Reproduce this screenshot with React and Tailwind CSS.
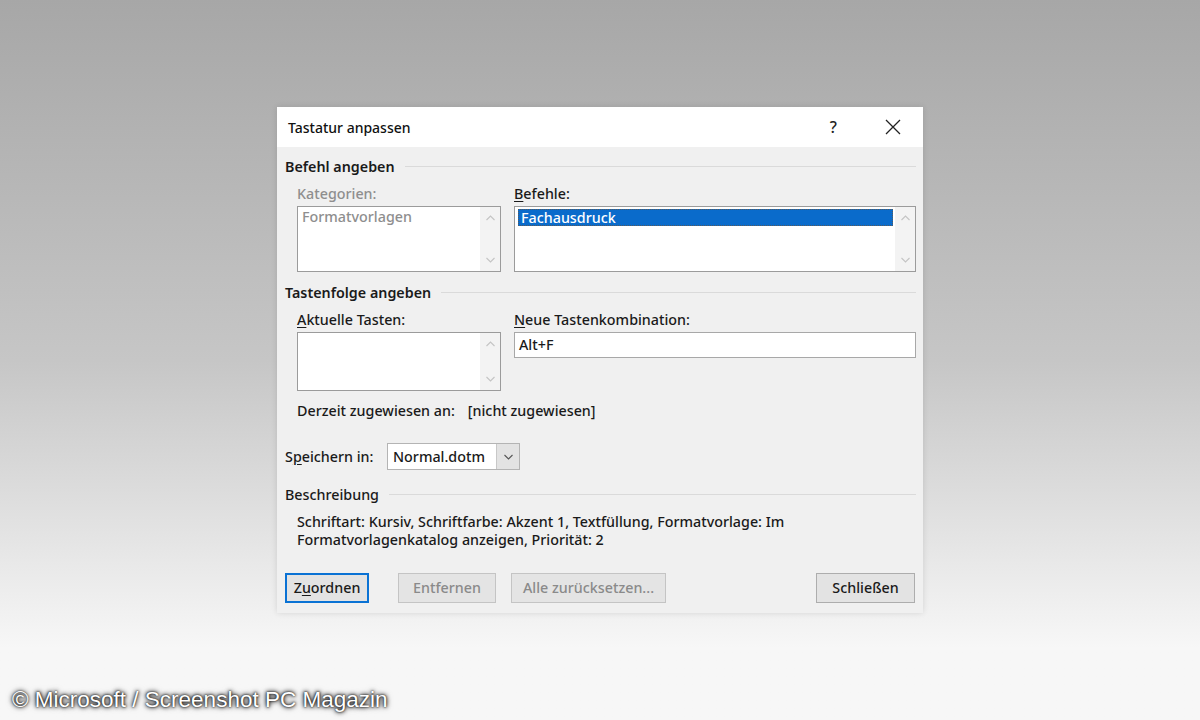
import React from "react";

const font = { fontFamily: '"Noto Sans", "Liberation Sans", sans-serif' };

function Chevron({ dir = "up", className = "" }) {
  return (
    <svg width="9" height="6" viewBox="0 0 9 6" className={className}>
      {dir === "up" ? (
        <path d="M0.5 5 L4.5 1 L8.5 5" fill="none" stroke="currentColor" strokeWidth="1.1" />
      ) : (
        <path d="M0.5 1 L4.5 5 L8.5 1" fill="none" stroke="currentColor" strokeWidth="1.1" />
      )}
    </svg>
  );
}

function ScrollBar() {
  return (
    <div className="w-[20px] bg-[#f3f3f3] flex flex-col items-center justify-between py-[8px] text-[#c4c4c4]">
      <Chevron dir="up" />
      <Chevron dir="down" />
    </div>
  );
}

function SectionHeader({ children }) {
  return (
    <div className="flex items-center h-[18px]">
      <span className="font-semibold text-[14.3px] text-[#1a1a1a] leading-[18px]">{children}</span>
      <div className="flex-1 h-px bg-[#dadada] ml-[10px] mr-[7px] -mt-[2px]" />
    </div>
  );
}

function Btn({ children, disabled, primary, w }) {
  return (
    <div
      className={
        "h-[30px] flex items-center justify-center text-[14.3px] font-medium " +
        w +
        " " +
        (primary
          ? "border-2 border-[#0a72d4] bg-[#e3e3e3] text-[#1a1a1a]"
          : disabled
          ? "border border-[#c4c4c4] bg-[#e4e4e4] text-[#8a8a8a]"
          : "border border-[#adadad] bg-[#e3e3e3] text-[#1a1a1a]")
      }
    >
      {children}
    </div>
  );
}

export default function App() {
  return (
    <div
      className="relative w-[1200px] h-[720px] overflow-hidden bg-linear-to-b from-[#a7a7a7] via-[#c6c6c6] via-50% to-[#f7f7f7] to-90% pt-[107px] pl-[277px]"
      style={font}
    >
      <div className="w-[646px] shadow-[0_0_6px_rgba(0,0,0,0.12)]">
        {/* Title bar */}
        <div className="h-[40px] bg-white flex items-center pl-[11px] pr-[22px]">
          <span className="text-[14px] font-medium text-[#111] flex-1 pt-[1px]">Tastatur anpassen</span>
          <span className="text-[16px] font-medium text-[#222] mr-[48px]">?</span>
          <svg width="16" height="16" viewBox="0 0 16 16">
            <path d="M1 1 L15 15 M15 1 L1 15" stroke="#222" strokeWidth="1.3" />
          </svg>
        </div>

        {/* Body */}
        <div className="bg-[#f0f0f0] pl-[8px] pt-[11px] pb-[10px] text-[#1a1a1a] text-[14.3px]">
          <SectionHeader>Befehl angeben</SectionHeader>

          <div className="flex gap-[13px] pl-[12px] mt-[9px] pr-[7px]">
            <div className="w-[204px] flex flex-col">
              <div className="h-[18px] font-medium text-[#8e8e8e] leading-[18px]">Kategorien:</div>
              <div className="mt-[3px] h-[66px] border border-[#9b9b9b] bg-white flex">
                <div className="flex-1 pl-[4px] pt-[1px] font-medium text-[#8e8e8e] leading-[18px]">
                  Formatvorlagen
                </div>
                <ScrollBar />
              </div>
            </div>
            <div className="flex-1 flex flex-col">
              <div className="h-[18px] font-medium leading-[18px]">
                <span className="underline underline-offset-2">B</span>efehle:
              </div>
              <div className="mt-[3px] h-[66px] border border-[#9b9b9b] bg-white flex">
                <div className="flex-1 pl-[3px] pt-[2px] pr-[2px]">
                  <div className="h-[17px] bg-[#0a6bcb] border border-dotted border-[#5a5a5a] text-white font-medium leading-[15px] pl-[2px]">
                    Fachausdruck
                  </div>
                </div>
                <ScrollBar />
              </div>
            </div>
          </div>

          <div className="mt-[12px]">
            <SectionHeader>Tastenfolge angeben</SectionHeader>
          </div>

          <div className="flex gap-[13px] pl-[12px] mt-[9px] pr-[7px]">
            <div className="w-[204px] flex flex-col">
              <div className="h-[18px] font-medium leading-[18px]">
                <span className="underline underline-offset-2">A</span>ktuelle Tasten:
              </div>
              <div className="mt-[3px] h-[59px] border border-[#9b9b9b] bg-white flex">
                <div className="flex-1" />
                <ScrollBar />
              </div>
            </div>
            <div className="flex-1 flex flex-col">
              <div className="h-[18px] font-medium leading-[18px]">
                <span className="underline underline-offset-2">N</span>eue Tastenkombination:
              </div>
              <div className="mt-[3px] h-[26px] border border-[#a8a8a8] bg-white flex items-center pl-[4px] font-medium">
                Alt+F
              </div>
            </div>
          </div>

          <div className="pl-[12px] mt-[11px] h-[18px] flex items-center font-medium leading-[18px]">
            <span>Derzeit zugewiesen an:</span>
            <span className="ml-[13px]">[nicht zugewiesen]</span>
          </div>

          <div className="mt-[23px] flex items-center h-[27px]">
            <span className="font-medium w-[102px]">
              S<span className="underline underline-offset-2">p</span>eichern in:
            </span>
            <div className="w-[133px] h-[27px] border border-[#b4b4b4] bg-white flex">
              <div className="flex-1 flex items-center pl-[5px] font-medium">Normal.dotm</div>
              <div className="w-[23px] bg-[#e3e3e3] border-l border-[#c8c8c8] flex items-center justify-center text-[#555]">
                <Chevron dir="down" />
              </div>
            </div>
          </div>

          <div className="mt-[16px]">
            <SectionHeader>
              <span className="font-medium">Beschreibung</span>
            </SectionHeader>
          </div>

          <div className="pl-[12px] mt-[9px] font-medium leading-[18px] w-[540px]">
            Schriftart: Kursiv, Schriftfarbe: Akzent 1, Textfüllung, Formatvorlage: Im Formatvorlagenkatalog anzeigen,
            Priorität: 2
          </div>

          <div className="mt-[24px] flex items-center pr-[8px]">
            <Btn primary w="w-[84px]">
              Z<span className="underline underline-offset-2">u</span>ordnen
            </Btn>
            <div className="ml-[29px]">
              <Btn disabled w="w-[98px]">Entfernen</Btn>
            </div>
            <div className="ml-[15px]">
              <Btn disabled w="w-[155px]">Alle zurücksetzen...</Btn>
            </div>
            <div className="flex-1" />
            <Btn w="w-[99px]">Schließen</Btn>
          </div>
        </div>
      </div>

      <div
        className="absolute left-[12px] top-[683px] text-[22.5px] text-white [text-shadow:0_0_2px_#000,0_0_4px_#000,0_0_6px_rgba(0,0,0,0.6)]"
        style={{ fontFamily: '"Liberation Sans", Arial, sans-serif' }}
      >
        © Microsoft / Screenshot PC Magazin
      </div>
    </div>
  );
}
